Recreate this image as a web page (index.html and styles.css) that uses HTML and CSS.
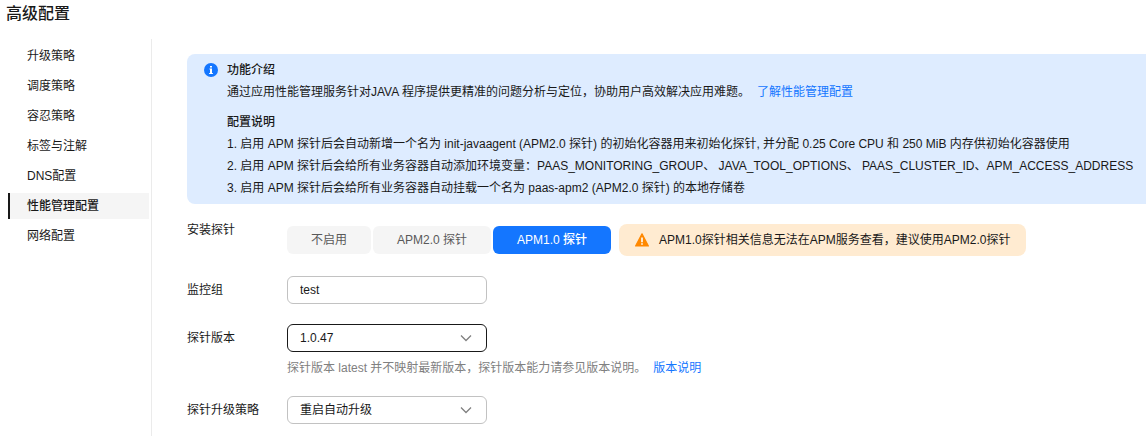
FILE: index.html
```html
<!DOCTYPE html>
<html lang="zh-CN">
<head>
<meta charset="utf-8">
<meta name="viewport" content="width=device-width, initial-scale=1">
<title>高级配置</title>
<link rel="stylesheet" href="styles.css">
</head>
<body>
<h1 class="page-title">高级配置</h1>
<div class="layout">
  <nav class="side-nav" aria-label="高级配置">
    <a class="nav-item" href="#upgrade">升级策略</a>
    <a class="nav-item" href="#schedule">调度策略</a>
    <a class="nav-item" href="#toleration">容忍策略</a>
    <a class="nav-item" href="#labels">标签与注解</a>
    <a class="nav-item" href="#dns">DNS配置</a>
    <a class="nav-item nav-item-active" href="#apm" aria-current="page">性能管理配置</a>
    <a class="nav-item" href="#network">网络配置</a>
  </nav>
  <main class="content">
    <section class="notice">
      <svg class="notice-icon" viewBox="0 0 14 14" aria-hidden="true">
        <circle cx="7" cy="7" r="7" fill="#1476ff"/>
        <path d="M6 3h2v1.5H6zM5.5 5.5H8V10h.9v1H5.1v-1H6V6.4h-.5z" fill="#fff"/>
      </svg>
      <div class="notice-body">
        <h2 class="notice-heading">功能介绍</h2>
        <p class="notice-text">通过应用性能管理服务针对JAVA 程序提供更精准的问题分析与定位，协助用户高效解决应用难题。<a class="link notice-link" href="#apm-guide">了解性能管理配置</a></p>
        <h2 class="notice-heading notice-heading-next">配置说明</h2>
        <p class="notice-text">1. 启用 APM 探针后会自动新增一个名为 init-javaagent (APM2.0 探针) 的初始化容器用来初始化探针, 并分配 0.25 Core CPU 和 250 MiB 内存供初始化容器使用</p>
        <p class="notice-text">2. 启用 APM 探针后会给所有业务容器自动添加环境变量：PAAS_MONITORING_GROUP、 JAVA_TOOL_OPTIONS、 PAAS_CLUSTER_ID、APM_ACCESS_ADDRESS</p>
        <p class="notice-text">3. 启用 APM 探针后会给所有业务容器自动挂载一个名为 paas-apm2 (APM2.0 探针) 的本地存储卷</p>
      </div>
    </section>
    <form class="form">
      <div class="row row-probe">
        <span class="row-label row-label-probe" id="probe-label">安装探针</span>
        <div class="probe-line">
          <div class="segments" role="radiogroup" aria-labelledby="probe-label">
            <label class="segment"><input class="segment-input" type="radio" name="probe" value="none">不启用</label>
            <label class="segment"><input class="segment-input" type="radio" name="probe" value="apm2">APM2.0 探针</label>
            <label class="segment"><input class="segment-input" type="radio" name="probe" value="apm1" checked>APM1.0 探针</label>
          </div>
          <div class="warning">
            <svg class="warning-icon" viewBox="0 0 14 14" aria-hidden="true">
              <path d="M7 .8 13.4 13H.6z" fill="#ff8800" stroke="#ff8800" stroke-width="1.2" stroke-linejoin="round"/>
              <path d="M6.2 4.5h1.6v4.7H6.2zM6.2 10.2h1.6v1.6H6.2z" fill="#fff"/>
            </svg>
            <span>APM1.0探针相关信息无法在APM服务查看，建议使用APM2.0探针</span>
          </div>
        </div>
      </div>
      <div class="row">
        <label class="row-label" for="group">监控组</label>
        <input class="field" id="group" type="text" value="test">
      </div>
      <div class="row">
        <label class="row-label" for="version">探针版本</label>
        <div>
          <div class="select-box">
            <select class="field field-active" id="version"><option>1.0.47</option></select>
            <svg class="chevron" viewBox="0 0 12 8" aria-hidden="true"><path d="M1 1.5l5 5 5-5" fill="none" stroke="#808080" stroke-width="1.3"/></svg>
          </div>
          <p class="hint">探针版本 latest 并不映射最新版本，探针版本能力请参见版本说明。<a class="link hint-link" href="#release-notes">版本说明</a></p>
        </div>
      </div>
      <div class="row">
        <label class="row-label" for="policy">探针升级策略</label>
        <div class="select-box">
          <select class="field" id="policy"><option>重启自动升级</option></select>
          <svg class="chevron" viewBox="0 0 12 8" aria-hidden="true"><path d="M1 1.5l5 5 5-5" fill="none" stroke="#808080" stroke-width="1.3"/></svg>
        </div>
      </div>
    </form>
  </main>
</div>
</body>
</html>
```

FILE: styles.css
```css
* {
  box-sizing: border-box;
}

body {
  margin: 0;
  min-height: 100vh;
  display: flex;
  flex-direction: column;
  background: #fff;
  color: #191919;
  font-family: "Liberation Sans", "Noto Sans CJK SC", sans-serif;
  font-size: 12px;
  line-height: 22px;
}

h1,
h2,
p {
  margin: 0;
}

.page-title {
  padding: 2px 6px 13px;
  font-size: 16px;
  font-weight: 500;
  line-height: 24px;
}

.layout {
  flex: 1;
  display: flex;
}

.side-nav {
  flex: none;
  width: 152px;
  padding: 4px 2px 0 8px;
  border-right: 1px solid #ebebeb;
  display: flex;
  flex-direction: column;
  gap: 4px;
}

.nav-item {
  padding-left: 17px;
  border-left: 2px solid transparent;
  color: inherit;
  line-height: 26px;
  text-decoration: none;
}

.nav-item-active {
  border-left-color: #191919;
  background: #f5f5f5;
  font-weight: 500;
}

.content {
  flex: 1;
  min-width: 0;
  padding: 15px 0 12px 35px;
}

.notice {
  display: flex;
  gap: 9px;
  padding: 5px 8px 5px 17px;
  border-radius: 8px 0 0 8px;
  background: #deecff;
}

.notice-icon {
  flex: none;
  width: 14px;
  height: 14px;
  margin-top: 4px;
}

.notice-heading {
  font-size: 12px;
  font-weight: 500;
}

.notice-heading-next {
  margin-top: 8px;
}

.link {
  color: #1476ff;
  text-decoration: none;
}

.notice-link,
.hint-link {
  margin-left: 7px;
}

.form {
  margin-top: 20px;
  display: flex;
  flex-direction: column;
  gap: 20px;
}

.row {
  display: grid;
  grid-template-columns: 100px 1fr;
  align-items: start;
}

.row-label {
  line-height: 28px;
}

.row-label-probe {
  line-height: 12px;
}

.probe-line {
  display: flex;
  flex-wrap: wrap;
  align-items: center;
  gap: 8px;
}

.segments {
  display: flex;
  gap: 2px;
}

.segment {
  position: relative;
  padding: 0 24px;
  border-radius: 6px;
  background: #f5f5f5;
  color: #595959;
  line-height: 28px;
  cursor: pointer;
}

.segment-input {
  position: absolute;
  inset: 0;
  width: 100%;
  height: 100%;
  margin: 0;
  appearance: none;
  cursor: pointer;
}

.segment:has(:checked) {
  background: #1476ff;
  color: #fff;
  font-weight: 500;
}

.warning {
  display: flex;
  align-items: center;
  gap: 10px;
  padding: 0 16px;
  border-radius: 8px;
  background: #ffebd1;
  line-height: 32px;
}

.warning-icon {
  flex: none;
  width: 14px;
  height: 14px;
}

.field {
  width: 200px;
  height: 28px;
  padding: 0 12px;
  border: 1px solid #c2c2c2;
  border-radius: 6px;
  background: #fff;
  color: inherit;
  font: inherit;
  appearance: none;
}

.field-active {
  border-color: #191919;
}

.select-box {
  display: grid;
  width: 200px;
  align-items: center;
}

.select-box > * {
  grid-area: 1 / 1;
}

.chevron {
  justify-self: end;
  width: 12px;
  height: 8px;
  margin-right: 15px;
  pointer-events: none;
}

.hint {
  padding-top: 8px;
  color: #808080;
  line-height: 16px;
}
```
